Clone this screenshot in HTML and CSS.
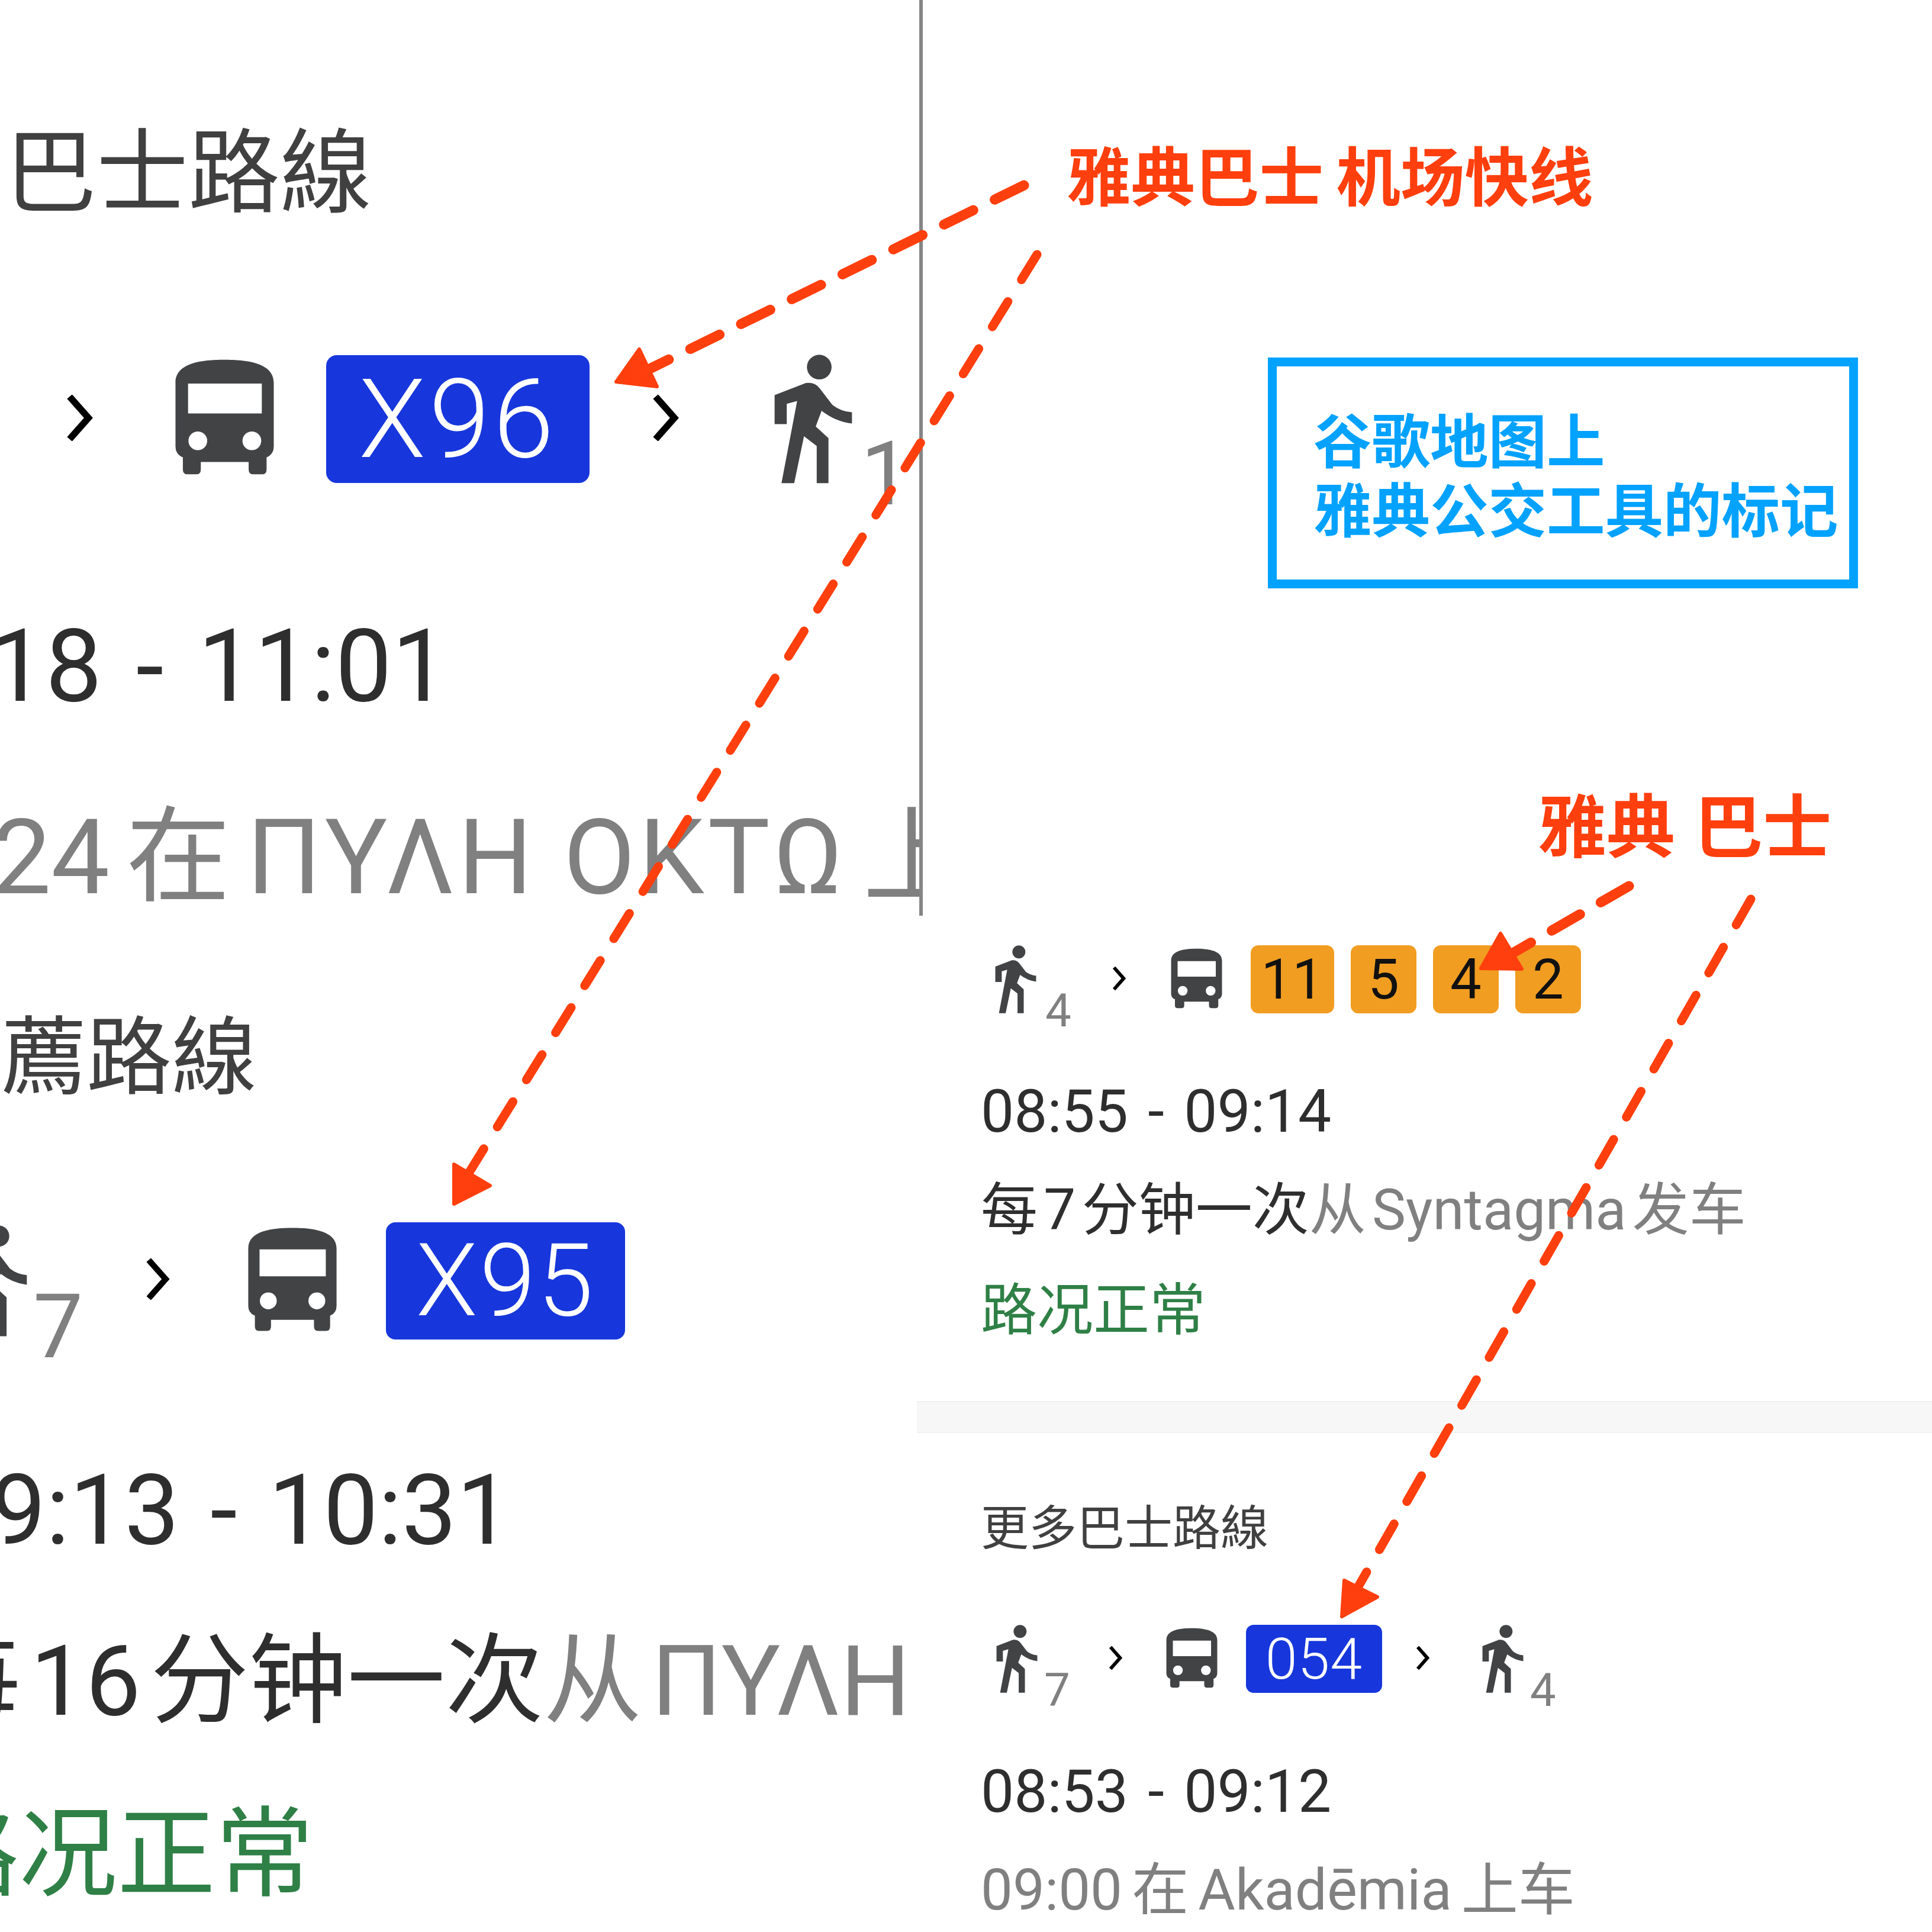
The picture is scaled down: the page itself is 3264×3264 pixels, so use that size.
FILE: index.html
```html
<!DOCTYPE html>
<html lang="zh">
<head>
  <meta charset="UTF-8" />
  <title>雅典公交工具的标记</title>
  <link rel="stylesheet" href="styles.css">
</head>
<body>
  <svg class="sprites" aria-hidden="true">
    <symbol id="bus" viewBox="55 50 493 585">
      <path fill-rule="evenodd" d="M55 170C55 70 190 55 300 55S548 70 548 170V490Q548 530 512 545V605Q512 630 490 630H445Q422 630 422 605V568H182V605Q182 630 160 630H115Q92 630 92 605V545Q55 530 55 490ZM118 175V325H488V175ZM167 415A47 47 0 1 0 167 509A47 47 0 1 0 167 415ZM438 415A47 47 0 1 0 438 509A47 47 0 1 0 438 415Z"/>
    </symbol>
    <symbol id="walk" viewBox="88 33 399 659">
      <circle cx="318" cy="97" r="63"/>
      <path d="M90 240L250 178Q295 172 320 205L385 290Q430 325 485 328V385Q400 375 330 320L300 400L365 460V690H305V500L240 450L190 690H125L205 270L152 285V388H90Z"/>
    </symbol>
    <symbol id="chev" viewBox="0 0 46 76">
      <path d="M7 3L38 38L7 73" fill="none" stroke="#000" stroke-width="11"/>
    </symbol>
  </svg>

  <main class="collage">
    <div class="col">
      <section class="crop crop-a">
        <h2 class="heading">巴士路線</h2>
        <div class="route">
          <svg class="chev"><use href="#chev"/></svg>
          <svg class="bus"><use href="#bus"/></svg>
          <span class="badge blue">X96</span>
          <svg class="chev"><use href="#chev"/></svg>
          <svg class="walk"><use href="#walk"/></svg>
          <span class="mins">1</span>
        </div>
        <p class="time">10:18 - 11:01</p>
        <p class="sub muted">10:24 在 <span class="greek">ΠΥΛΗ ΟΚΤΩ</span> 上车</p>
      </section>

      <section class="crop crop-b">
        <h2 class="heading">推薦路線</h2>
        <div class="route">
          <svg class="walk"><use href="#walk"/></svg>
          <span class="mins">7</span>
          <svg class="chev"><use href="#chev"/></svg>
          <svg class="bus"><use href="#bus"/></svg>
          <span class="badge blue">X95</span>
        </div>
        <p class="time">09:13 - 10:31</p>
        <p class="sub">每 16 分钟一次<span class="muted">从 ΠΥΛΗ</span></p>
        <p class="sub ok">路况正常</p>
      </section>
    </div>

    <div class="col">
      <section class="crop crop-c">
        <div class="route">
          <svg class="walk"><use href="#walk"/></svg>
          <span class="mins">4</span>
          <svg class="chev"><use href="#chev"/></svg>
          <svg class="bus"><use href="#bus"/></svg>
          <span class="badge amber">11</span>
          <span class="badge amber">5</span>
          <span class="badge amber">4</span>
          <span class="badge amber">2</span>
        </div>
        <p class="time">08:55 - 09:14</p>
        <p class="sub">每 7 分钟一次<span class="muted">从 Syntagma 发车</span></p>
        <p class="sub ok">路况正常</p>
      </section>

      <div class="band"></div>

      <section class="crop crop-d">
        <h2 class="heading">更多巴士路線</h2>
        <div class="route">
          <svg class="walk"><use href="#walk"/></svg>
          <span class="mins">7</span>
          <svg class="chev"><use href="#chev"/></svg>
          <svg class="bus"><use href="#bus"/></svg>
          <span class="badge blue">054</span>
          <svg class="chev"><use href="#chev"/></svg>
          <svg class="walk"><use href="#walk"/></svg>
          <span class="mins">4</span>
        </div>
        <p class="time">08:53 - 09:12</p>
        <p class="sub muted">09:00 在 Akadēmia 上车</p>
      </section>
    </div>

    <!-- annotations drawn on top of the screenshots -->
    <svg class="arrows" viewBox="0 0 3264 3264">
      <path class="dash dash-wide" d="M1730 313L1100 622"/>
      <path class="dash" d="M1752 430L790 1985"/>
      <path class="dash dash-wide" d="M2752 1497L2530 1625"/>
      <path class="dash" d="M2958 1519L2295 2680"/>
      <g class="head">
        <path d="M1041 645L1080 590L1110 653Z"/>
        <path d="M767 2034L767 1967L828 2003Z"/>
        <path d="M2502 1636L2535 1577L2571 1637Z"/>
        <path d="M2267 2731L2271 2670L2327 2698Z"/>
      </g>
    </svg>
    <p class="note note-airport">雅典巴士 机场快线</p>
    <p class="note note-city">雅典 巴士</p>
    <div class="legend">谷歌地图上<br>雅典公交工具的标记</div>
  </main>
</body>
</html>
```

FILE: styles.css
```css
* { box-sizing: border-box; }

body {
  margin: 0;
  background: #fff;
  font-family: Roboto, "Noto Sans CJK SC", sans-serif;
  color: #333;
}

.sprites { display: none; }

.collage {
  position: relative;
  width: 3264px;
  height: 3264px;
  overflow: hidden;
  display: grid;
  grid-template-columns: 1559px 1705px;
}

.crop { overflow: hidden; white-space: nowrap; }

.crop p, .crop h2 { margin: 0; font-weight: 400; }

/* left column, big screenshots */
.crop-a {
  height: 1547px;
  padding-top: 193px;
  border-right: 6px solid #858585;
}
.crop-a .heading { font-size: 155px; line-height: 200px; margin-left: 8px; color: #404040; }
.crop-a .route { margin-top: 207px; height: 216px; }
.crop-a .time { margin: 210px 0 0 -251px; font-size: 170px; word-spacing: .09em; }
.crop-a .sub { margin: 123px 0 0 -253px; font-size: 176px; word-spacing: -.09em; }
.crop-a .greek { letter-spacing: .035em; word-spacing: -.02em; }

.crop-a .chev { width: 48px; height: 78px; margin: 0 0 4px 110px; }
.crop-a .bus { width: 167px; height: 197px; margin: 0 0 8px 138px; }
.crop-a .badge { width: 445px; height: 216px; margin-left: 88px; font-size: 185px; letter-spacing: .03em; border-radius: 18px; }
.crop-a .badge + .chev { margin-left: 104px; }
.crop-a .walk { width: 132px; height: 218px; margin-left: 160px; }
.crop-a .mins { font-size: 150px; margin: 0 0 -60px 14px; align-self: flex-end; line-height: 150px; }

.crop-b { padding-top: 146px; }
.crop-b .heading { font-size: 144px; line-height: 190px; margin-left: -142px; color: #404040; }
.crop-b .route { margin-top: 182px; height: 198px; }
.crop-b .time { margin: 189px 0 0 -108px; font-size: 165px; word-spacing: .07em; }
.crop-b .sub { margin: 89px 0 0 -131px; font-size: 166px; word-spacing: -.15em; }
.crop-b .ok { margin: 93px 0 0 -134px; }

.crop-b .walk { width: 114px; height: 188px; margin-left: -68px; }
.crop-b .mins { font-size: 150px; margin: 0 0 -54px 10px; align-self: flex-end; line-height: 150px; }
.crop-b .chev { width: 44px; height: 70px; margin: 0 0 6px 104px; }
.crop-b .bus { width: 150px; height: 177px; margin: 0 0 6px 131px; }
.crop-b .badge { width: 404px; height: 198px; margin-left: 83px; font-size: 170px; letter-spacing: .02em; border-radius: 16px; }

/* right column, small screenshots */
.crop-c { padding: 1597px 0 0 98px; }
.crop-c .route { height: 115px; margin-left: 24px; }
.crop-c .time { margin-top: 106px; }
.crop-c .sub { margin-top: 46px; }
.crop-c .ok { margin-top: 51px; }

.band {
  height: 54px;
  margin: 92px 0 0 -10px;
  background: #f7f7f7;
  border-top: 2px solid #f0f0f0;
  border-bottom: 2px solid #f0f0f0;
}

.crop-d { padding-left: 98px; }
.crop-d .heading { font-size: 81px; line-height: 110px; margin-top: 107px; color: #404040; }
.crop-d .route { height: 115px; margin-top: 107px; margin-left: 26px; }
.crop-d .time { margin-top: 107px; }
.crop-d .sub { margin-top: 46px; word-spacing: -.08em; }

.crop-c .time, .crop-d .time { font-size: 100px; word-spacing: .085em; }
.crop-c .sub { font-size: 96px; word-spacing: -.14em; }
.crop-d .sub { font-size: 96px; }
.crop-c .walk, .crop-d .walk { width: 70px; height: 115px; }
.crop-c .mins { font-size: 78px; line-height: 78px; margin: 0 0 -35px 15px; align-self: flex-end; }
.crop-d .mins { font-size: 78px; line-height: 78px; margin: 0 0 -35px 11px; align-self: flex-end; }
.crop-c .chev, .crop-d .chev { width: 25px; height: 40px; margin: 0 0 4px 68px; }
.crop-c .bus, .crop-d .bus { width: 87px; height: 102px; margin-bottom: 4px; }
.crop-c .bus { margin-left: 75px; }
.crop-c .badge, .crop-d .badge { height: 115px; font-size: 94px; border-radius: 13px; }
.crop-c .badge { width: 141px; margin-left: 48px; }
.crop-c .badge + .badge { width: 111px; margin-left: 28px; }
.crop-d .chev { margin-left: 64px; }
.crop-d .bus { margin-left: 73px; }
.crop-d .badge { width: 230px; margin-left: 48px; font-size: 97px; letter-spacing: .01em; }
.crop-d .badge + .chev { margin-left: 56px; }
.crop-d .chev + .walk { margin-left: 88px; }

/* shared pieces of a trip row */
.route { display: flex; align-items: center; }
.route svg { flex: none; fill: #414345; }

.badge {
  flex: none;
  display: flex;
  align-items: center;
  justify-content: center;
  font-weight: 300;
}
.badge.blue { background: #1737dc; color: #fff; }
.badge.amber { background: #f19d21; color: #111; font-weight: 400; }

.mins { color: #808080; }

.time { line-height: 120px; color: #2e2e2e; }
.sub { line-height: 120px; color: #2e2e2e; }
.crop-a .time, .crop-b .time, .crop-a .sub, .crop-b .sub { line-height: 200px; }
.muted, .sub.muted { color: #808080; }
.ok, .sub.ok { color: #2f8046; }
.crop-c .ok { font-size: 95px; }

/* annotation layer */
.arrows { position: absolute; top: 0; left: 0; width: 3264px; height: 3264px; }
.dash {
  fill: none;
  stroke: #ff3f0d;
  stroke-width: 15;
  stroke-linecap: round;
  stroke-dasharray: 50 43.5;
}
.dash-wide { stroke-width: 17; stroke-dasharray: 55 40.5; }
.head path {
  fill: #ff3f0d;
  stroke: #ff3f0d;
  stroke-width: 6;
  stroke-linejoin: round;
}

.note {
  position: absolute;
  margin: 0;
  color: #ff3f0d;
  font-weight: 700;
  white-space: nowrap;
}
.note-airport { left: 1802px; top: 242px; font-size: 108.5px; line-height: 120px; word-spacing: -.05em; }
.note-city { left: 2598px; top: 1339px; font-size: 116px; line-height: 120px; word-spacing: .03em; }

.legend {
  position: absolute;
  left: 2142px;
  top: 604px;
  width: 997px;
  height: 390px;
  padding: 71px 0 0 62px;
  border: 15px solid #03a2ff;
  color: #03a2ff;
  font-size: 98.5px;
  line-height: 117px;
  font-weight: 700;
  white-space: nowrap;
}
```
